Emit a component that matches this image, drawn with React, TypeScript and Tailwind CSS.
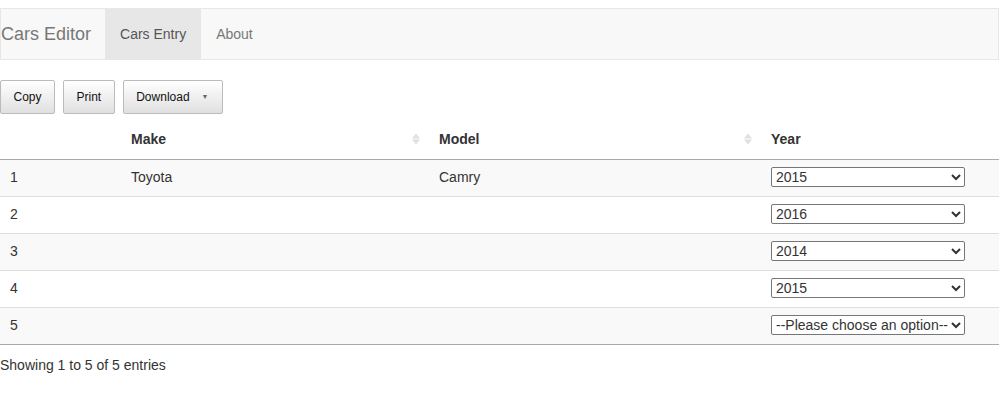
import React from 'react';

const rows = [
  { id: 1, make: 'Toyota', model: 'Camry', year: '2015' },
  { id: 2, make: '', model: '', year: '2016' },
  { id: 3, make: '', model: '', year: '2014' },
  { id: 4, make: '', model: '', year: '2015' },
  { id: 5, make: '', model: '', year: '' },
];

const SortIcon = () => (
  <span className="absolute right-[8px] top-1/2 -translate-y-1/2 flex flex-col items-center gap-[1px]">
    <span className="w-0 h-0 border-l-[4px] border-r-[4px] border-b-[5px] border-l-transparent border-r-transparent border-b-[#e0e0e0]" />
    <span className="w-0 h-0 border-l-[4px] border-r-[4px] border-t-[5px] border-l-transparent border-r-transparent border-t-[#e0e0e0]" />
  </span>
);

const btn =
  'h-[34px] px-[12.5px] text-[12px] text-[#111] border border-[#bbb] rounded-[2px] bg-gradient-to-b from-white to-[#e0e0e0]';

export default function App() {
  return (
    <div className="font-['Liberation_Sans',Arial,sans-serif] text-[14px] text-[#333] bg-white min-h-[406px] pt-[8px]">
      <nav className="h-[52px] bg-[#f8f8f8] border border-[#e7e7e7] flex items-stretch">
        <span className="flex items-center text-[18px] text-[#777] pr-[14px]">Cars Editor</span>
        <span className="flex items-center px-[15px] bg-[#e7e7e7] text-[#555]">Cars Entry</span>
        <span className="flex items-center px-[15px] text-[#777]">About</span>
      </nav>

      <div className="mt-[20px] flex gap-[8px]">
        <button className={btn}>Copy</button>
        <button className={btn}>Print</button>
        <button className={`${btn} flex items-center gap-[12px] pr-[13px]`}>
          Download
          <span className="text-[7px] text-[#666]">▼</span>
        </button>
      </div>

      <table className="w-full mt-[6px] border-collapse">
        <thead>
          <tr className="h-[39px] border-b border-[#aaa]">
            <th className="w-[120px]" />
            <th className="relative text-left font-bold text-[#333] pl-[11px] w-[308px]">
              Make
              <SortIcon />
            </th>
            <th className="relative text-left font-bold text-[#333] pl-[11px] w-[332px]">
              Model
              <SortIcon />
            </th>
            <th className="text-left font-bold text-[#333] pl-[11px]">Year</th>
          </tr>
        </thead>
        <tbody>
          {rows.map((r, i) => (
            <tr
              key={r.id}
              className={`h-[37px] ${i % 2 === 0 ? 'bg-[#f9f9f9]' : 'bg-white'} ${
                i === rows.length - 1 ? 'border-b border-[#aaa]' : 'border-b border-[#ddd]'
              }`}
            >
              <td className="pl-[10px]">{r.id}</td>
              <td className="pl-[11px]">{r.make}</td>
              <td className="pl-[11px]">{r.model}</td>
              <td className="pl-[11px]">
                <select
                  defaultValue={r.year}
                  className="w-[194px] h-[20px] text-[14px] text-[#333] bg-white border border-[#767676] rounded-[2px] px-0 font-['Liberation_Sans',Arial,sans-serif]"
                >
                  <option value="">--Please choose an option--</option>
                  <option value="2014">2014</option>
                  <option value="2015">2015</option>
                  <option value="2016">2016</option>
                </select>
              </td>
            </tr>
          ))}
        </tbody>
      </table>

      <div className="pt-[10px]">Showing 1 to 5 of 5 entries</div>
    </div>
  );
}
